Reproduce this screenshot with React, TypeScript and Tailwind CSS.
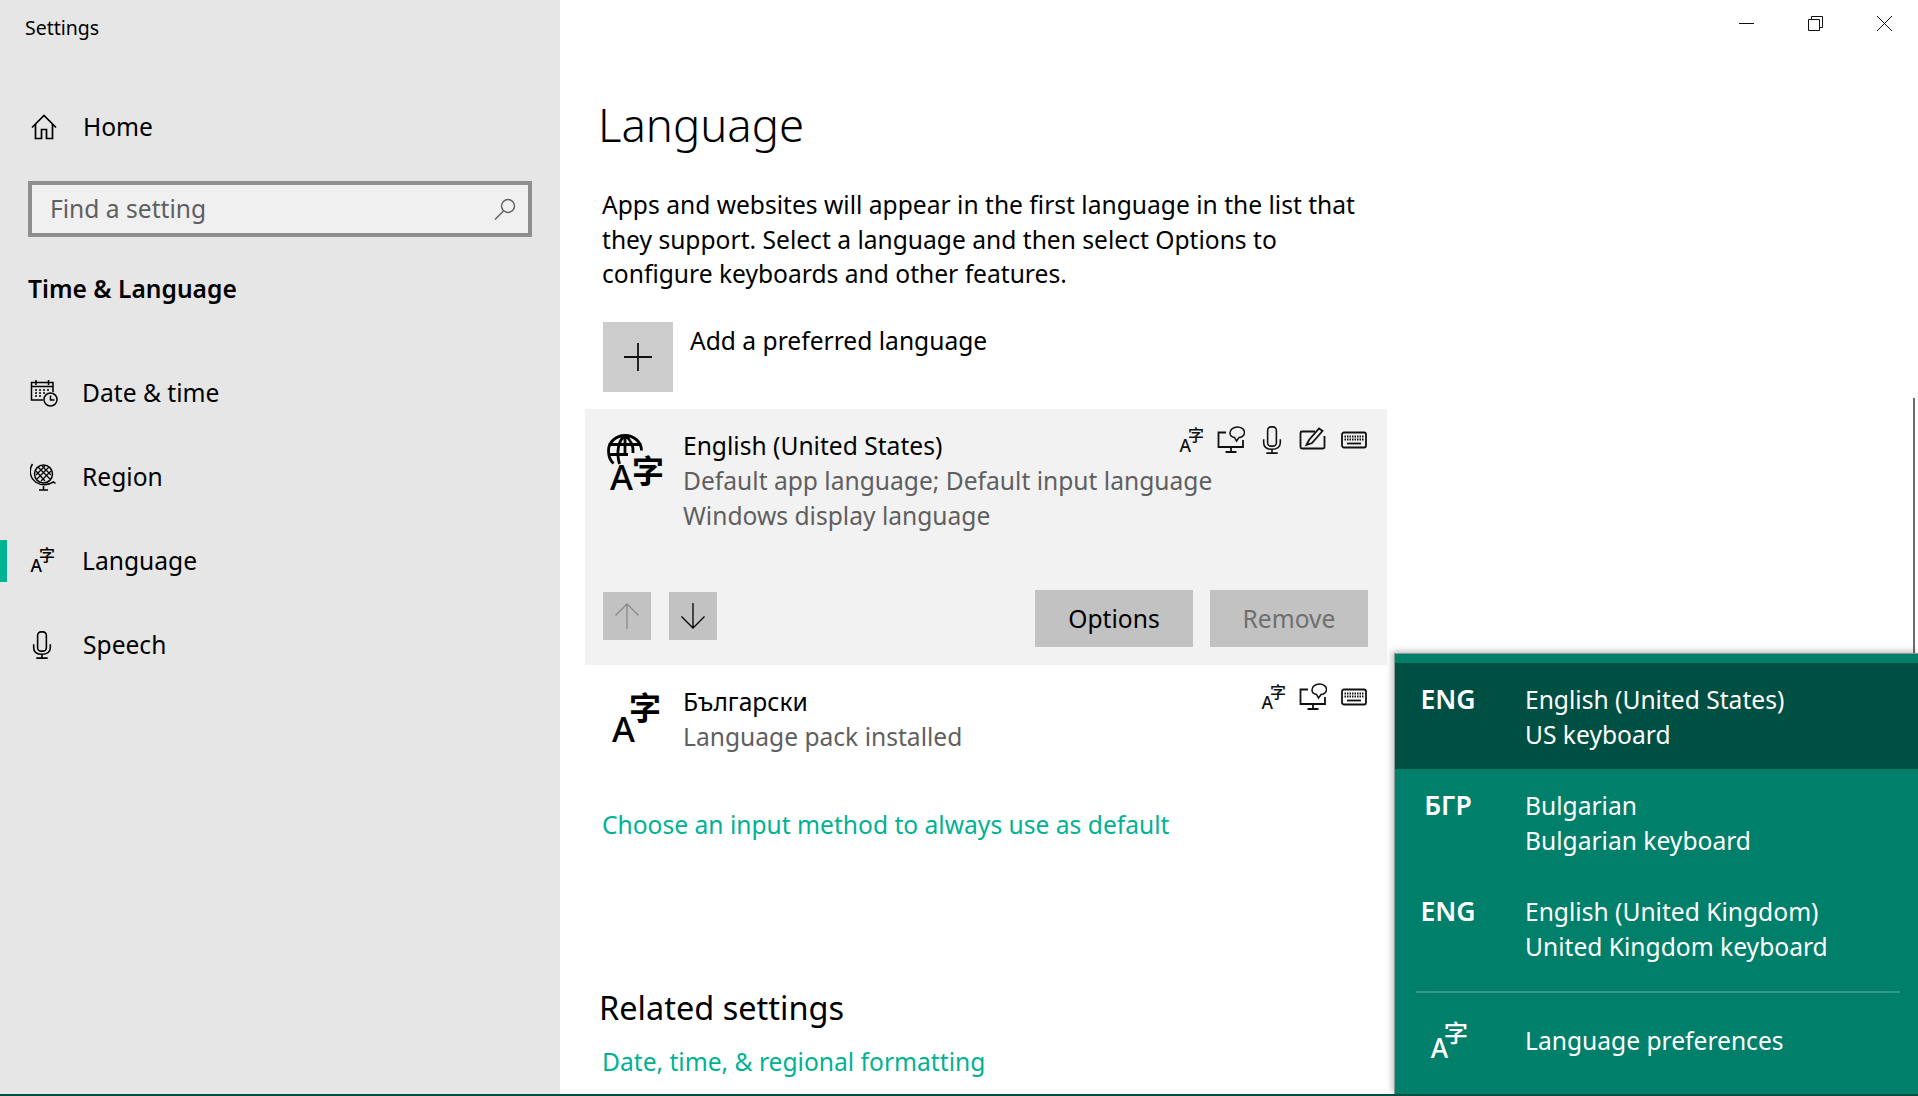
import type { ReactNode } from 'react';

// language glyph: real text letters, upper-right ideograph and lower-left A
const LangIcon = ({ className, weight = 500 }: { className: string; weight?: number }) => (
  <svg viewBox="0 0 50 50" className={`${className} overflow-visible`} fill="currentColor">
    <text x="1" y="49" fontSize="35" fontWeight="500" fontFamily="Noto Sans">A</text>
    <text x="18" y="27" fontSize="32" fontWeight={weight} fontFamily="Noto Sans CJK SC">字</text>
  </svg>
);

// display language marker: globe with the glyph pair below it
const DisplayLangIcon = () => (
  <svg viewBox="0 0 60 60" className="h-[60px] w-[60px] overflow-visible" fill="none">
    <g stroke="#000" strokeWidth="2.800">
      <path d="M6.500 29.500C2.500 26 1.500 21 1.500 16.500A16.500 15 0 0 1 34.500 16.500M1.500 10.500H34.500M1.500 20.500H21M18 1.500V21M18 1.500C11.500 6 9 18 12.500 30M18 1.500C24 6 26.500 13 26 19" />
    </g>
    <text x="3" y="56" fontSize="35" fontWeight="500" fill="#000" fontFamily="Noto Sans">A</text>
    <text x="25" y="49" fontSize="32" fontWeight="600" fill="#000" fontFamily="Noto Sans CJK SC">字</text>
  </svg>
);

const HomeIcon = () => (
  <svg viewBox="0 0 26 26" className="h-[26px] w-[26px]" fill="none" stroke="currentColor" strokeWidth="1.700">
    <path d="M1 13.500 13 1.500l12 12M4.500 10.500V24.500h6V15.500h5v9h6V10.500" />
  </svg>
);

const SearchIcon = () => (
  <svg viewBox="0 0 22 22" className="h-[22px] w-[22px]" fill="none" stroke="#5f5f5f" strokeWidth="1.400">
    <circle cx="14" cy="8" r="6.500" />
    <path d="M9.500 13 1 21.500" />
  </svg>
);

const CalendarIcon = () => (
  <svg viewBox="0 0 28 28" className="h-[28px] w-[28px]" fill="none" stroke="currentColor" strokeWidth="1.500">
    <path d="M13 21H1.500V3.500h21.500V13M6 1v5M18.500 1v5M1.500 7.500H23" />
    <path d="M5 11h2M9 11h2M13 11h2M17 11h2M5 14h2M9 14h2M13 14h2M5 17h2M9 17h2" strokeWidth="1.300" />
    <circle cx="20.500" cy="20.500" r="6.500" />
    <path d="M20.500 16.500v4.500h4" />
  </svg>
);

const GlobeIcon = () => (
  <svg viewBox="0 0 28 28" className="h-[28px] w-[28px]" fill="none" stroke="currentColor" strokeWidth="1.500">
    <circle cx="13.500" cy="11" r="9" />
    <path d="M2.500 1c-4 6-2.500 14 3 18 5 3.500 12 3.500 18 0l2 1.500M13.500 23v4M9 27h9" />
    <path d="M8 4l12 12M12 3l9 9M6 8l9 10M19 4 7 16M15 3l-9 9M21 8 11 18" strokeWidth="1.200" />
  </svg>
);

const MicIcon = ({ className }: { className: string }) => (
  <svg viewBox="0 0 24 32" className={className} fill="none" stroke="currentColor" strokeWidth="1.800">
    <rect x="7" y="1" width="10" height="22" rx="4" />
    <path d="M2.500 15v4c0 5 4 7.500 9.500 7.500s9.500-2.500 9.500-7.500v-4M12 26.500V31M5.500 31h13" />
  </svg>
);

const SpeechDisplayIcon = () => (
  <svg viewBox="0 0 28 28" className="h-[28px] w-[28px]" fill="none" stroke="currentColor" strokeWidth="1.800">
    <path d="M9 6.500H1.500V21h24.500v-7" />
    <path d="M14 21v5M8.500 26h11" />
    <path d="M13 7c0-3.500 3.500-6 7.500-6s7 2.500 7 5.500-3 5-5.500 5l-2.500 3.500-2-3.500c-3-.5-4.500-2-4.500-4.500z" strokeWidth="1.500" />
  </svg>
);

const PenBoxIcon = () => (
  <svg viewBox="0 0 28 28" className="h-[28px] w-[28px]" fill="none" stroke="currentColor" strokeWidth="1.800">
    <path d="M16 5.500H3a1.500 1.500 0 0 0-1.500 1.500v14A1.500 1.500 0 0 0 3 22.500h21a1.500 1.500 0 0 0 1.500-1.500V10" />
    <path d="M7.500 19 10 14 20 2.500l3.500 2.500L13 17z" />
  </svg>
);

const KeyboardIcon = () => (
  <svg viewBox="0 0 28 28" className="h-[28px] w-[28px]" fill="none" stroke="currentColor">
    <rect x="2" y="6.500" width="24" height="15" rx="2" strokeWidth="1.800" />
    <path d="M4.500 10.500h19M4.500 13.500h19" strokeWidth="1.800" strokeDasharray="1.500 1" />
    <path d="M7 17.500h14" strokeWidth="1.800" />
  </svg>
);

const ArrowIcon = ({ up }: { up?: boolean }) => (
  <svg viewBox="0 0 28 28" className={up ? 'h-[28px] w-[28px] rotate-180' : 'h-[28px] w-[28px]'} fill="none" stroke="currentColor" strokeWidth="1.300">
    <path d="M14 1v25M2.500 14.500 14 26l11.500-11.500" />
  </svg>
);

const NavRow = ({ icon, label, active, textClass }: { icon: ReactNode; label: string; active?: boolean; textClass?: string }) => (
  <div className="relative flex h-[84px] items-center pl-[30px] text-[24.600px] text-black">
    {active && <div className="absolute left-0 top-[21px] h-[42px] w-[7px] bg-[#00b294]" />}
    <div className="flex w-[52px] shrink-0 items-center">{icon}</div>
    <span className={textClass}>{label}</span>
  </div>
);

const StatusIcons = ({ children }: { children: ReactNode }) => (
  <div className="flex items-center gap-[13px] text-[#111]">{children}</div>
);

const InputRow = ({ code, name, keyboard, selected }: { code: string; name: string; keyboard: string; selected?: boolean }) => (
  <div className={selected ? 'flex h-[106px] bg-[#004f43] pt-[19px]' : 'flex h-[106px] pt-[19px]'}>
    <div className="w-[106px] shrink-0 text-center text-[26.500px] leading-[35px] font-semibold">{code}</div>
    <div className="ml-[24px] text-[24.600px] leading-[35px]">
      <div>{name}</div>
      <div>{keyboard}</div>
    </div>
  </div>
);

export default function App() {
  return (
    <div className="relative flex h-[1096px] w-[1918px] overflow-hidden border-b-2 border-[#004f43] bg-white text-black [font-family:'Noto_Sans','Noto_Sans_CJK_SC',sans-serif]">
      {/* left navigation */}
      <aside className="w-[560px] shrink-0 bg-[#e6e6e6]">
        <div className="flex h-[56px] items-center pl-[25px] text-[19.500px]">Settings</div>
        <div className="mt-[43px] flex h-[56px] items-center pl-[31px] text-[24.600px]">
          <HomeIcon />
          <span className="ml-[26px]">Home</span>
        </div>
        <div className="mx-[28px] mt-[26px] flex h-[56px] items-center justify-between border-4 border-[#8e8e8e] bg-[#f0f0f0] pl-[18px] pr-[12px] text-[24.600px] text-[#5f5f5f]">
          <span>Find a setting</span>
          <SearchIcon />
        </div>
        <div className="mt-[32px] flex h-[40px] items-center pl-[28px] text-[24.600px] font-semibold">Time &amp; Language</div>
        <div className="mt-[42px]">
          <NavRow icon={<CalendarIcon />} label="Date &amp; time" />
          <NavRow icon={<GlobeIcon />} label="Region" />
          <NavRow icon={<LangIcon className="-mt-[3px] h-[25px] w-[25px]" />} label="Language" active />
          <NavRow icon={<MicIcon className="ml-[1px] h-[28px] w-[22px]" />} label="Speech" textClass="ml-[1px]" />
        </div>
      </aside>

      {/* language page */}
      <main className="flex-1">
        <h1 className="ml-[38px] mt-[94px] h-[60px] text-[45.500px] leading-[60px] font-light">Language</h1>
        <p className="ml-[42px] mt-[34px] w-[790px] text-[24.600px] leading-[34.500px]">
          Apps and websites will appear in the first language in the list that they support. Select a language and then select Options to configure keyboards and other features.
        </p>
        <div className="ml-[43px] mt-[30px] flex">
          <div className="flex h-[70px] w-[70px] items-center justify-center bg-[#cccccc]">
            <svg viewBox="0 0 30 30" className="h-[30px] w-[30px]" fill="none" stroke="#111" strokeWidth="1.800">
              <path d="M15 1v28M1 15h28" />
            </svg>
          </div>
          <span className="ml-[17px] pt-[2px] text-[24.600px] leading-[34px]">Add a preferred language</span>
        </div>

        <section className="ml-[25px] mt-[17px] flex h-[256px] w-[802px] flex-col bg-[#f2f2f2]">
          <div className="flex pl-[22px] pr-[19px] pt-[19px]">
            <div className="h-[62px] w-[76px] shrink-0 pt-[6px]">
              <DisplayLangIcon />
            </div>
            <div className="min-w-0 flex-1 whitespace-nowrap text-[24.600px] leading-[35px]">
              <div>English (United States)</div>
              <div className="text-[#5f5f5f]">Default app language; Default input language</div>
              <div className="text-[#5f5f5f]">Windows display language</div>
            </div>
            <div className="-mt-[2px] self-start">
              <StatusIcons>
                <LangIcon className="h-[25px] w-[25px]" />
                <SpeechDisplayIcon />
                <MicIcon className="h-[28px] w-[28px]" />
                <PenBoxIcon />
                <KeyboardIcon />
              </StatusIcons>
            </div>
          </div>
          <div className="mb-[18px] mt-auto flex items-start pl-[18px] pr-[19px] text-[24.600px]">
            <div className="mt-[2px] flex h-[48px] w-[48px] items-center justify-center bg-[#c2c2c2] text-[#8a8a8a]">
              <ArrowIcon up />
            </div>
            <div className="ml-[18px] mt-[2px] flex h-[48px] w-[48px] items-center justify-center bg-[#c2c2c2] text-black">
              <ArrowIcon />
            </div>
            <div className="ml-auto flex h-[57px] w-[158px] items-center justify-center bg-[#c2c2c2] pt-[3px]">Options</div>
            <div className="ml-[17px] flex h-[57px] w-[158px] items-center justify-center bg-[#c2c2c2] pt-[3px] text-[#6f6f6f]">Remove</div>
          </div>
        </section>

        <section className="ml-[25px] flex h-[120px] w-[802px] pl-[22px] pr-[19px] pt-[19px]">
          <div className="h-[62px] w-[76px] shrink-0">
            <LangIcon className="ml-[4px] mt-[9px] h-[50px] w-[50px]" weight={600} />
          </div>
          <div className="min-w-0 flex-1 text-[24.600px] leading-[35px]">
            <div>Български</div>
            <div className="text-[#5f5f5f]">Language pack installed</div>
          </div>
          <div className="-mt-[1px] self-start">
            <StatusIcons>
              <LangIcon className="h-[25px] w-[25px]" />
              <SpeechDisplayIcon />
              <KeyboardIcon />
            </StatusIcons>
          </div>
        </section>

        <div className="ml-[42px] mt-[23px] text-[24.600px] leading-[34px] text-[#00b294]">Choose an input method to always use as default</div>
        <h2 className="ml-[39px] mt-[144px] h-[44px] text-[32.500px] leading-[44px]">Related settings</h2>
        <div className="ml-[42px] mt-[15px] text-[24.600px] leading-[34px] text-[#00b294]">Date, time, &amp; regional formatting</div>
      </main>

      {/* window controls */}
      <div className="absolute right-0 top-0 flex h-[46px] items-center pr-[26px] text-[#111]">
        <svg viewBox="0 0 15 15" className="h-[15px] w-[15px]" fill="none" stroke="currentColor">
          <path d="M0 7.500h15" />
        </svg>
        <svg viewBox="0 0 15 15" className="ml-[54px] h-[15px] w-[15px]" fill="none" stroke="currentColor">
          <path d="M3.500 3.500V.5h11v11h-3M.5 3.500h11v11H.5z" />
        </svg>
        <svg viewBox="0 0 15 15" className="ml-[54px] h-[15px] w-[15px]" fill="none" stroke="currentColor">
          <path d="m0 0 15 15M15 0 0 15" />
        </svg>
      </div>

      <div className="absolute right-[3px] top-[398px] h-[255px] w-[2px] bg-[#6b6b6b]" />

      {/* input switcher flyout */}
      <div className="absolute bottom-0 left-[1394px] right-0 top-[653px] border-l border-t border-[#8a9a96] bg-[#00806a] pt-[9px] text-white shadow-[-2px_-2px_6px_rgba(0,0,0,0.25)]">
        <InputRow code="ENG" name="English (United States)" keyboard="US keyboard" selected />
        <InputRow code="БГР" name="Bulgarian" keyboard="Bulgarian keyboard" />
        <InputRow code="ENG" name="English (United Kingdom)" keyboard="United Kingdom keyboard" />
        <div className="ml-[21px] mr-[18px] mt-[10px] h-[2px] bg-[#33998a]" />
        <div className="flex items-center pt-[28px]">
          <LangIcon className="ml-[35px] h-[38px] w-[38px]" />
          <span className="ml-[57px] text-[24.600px] leading-[35px]">Language preferences</span>
        </div>
      </div>
    </div>
  );
}
